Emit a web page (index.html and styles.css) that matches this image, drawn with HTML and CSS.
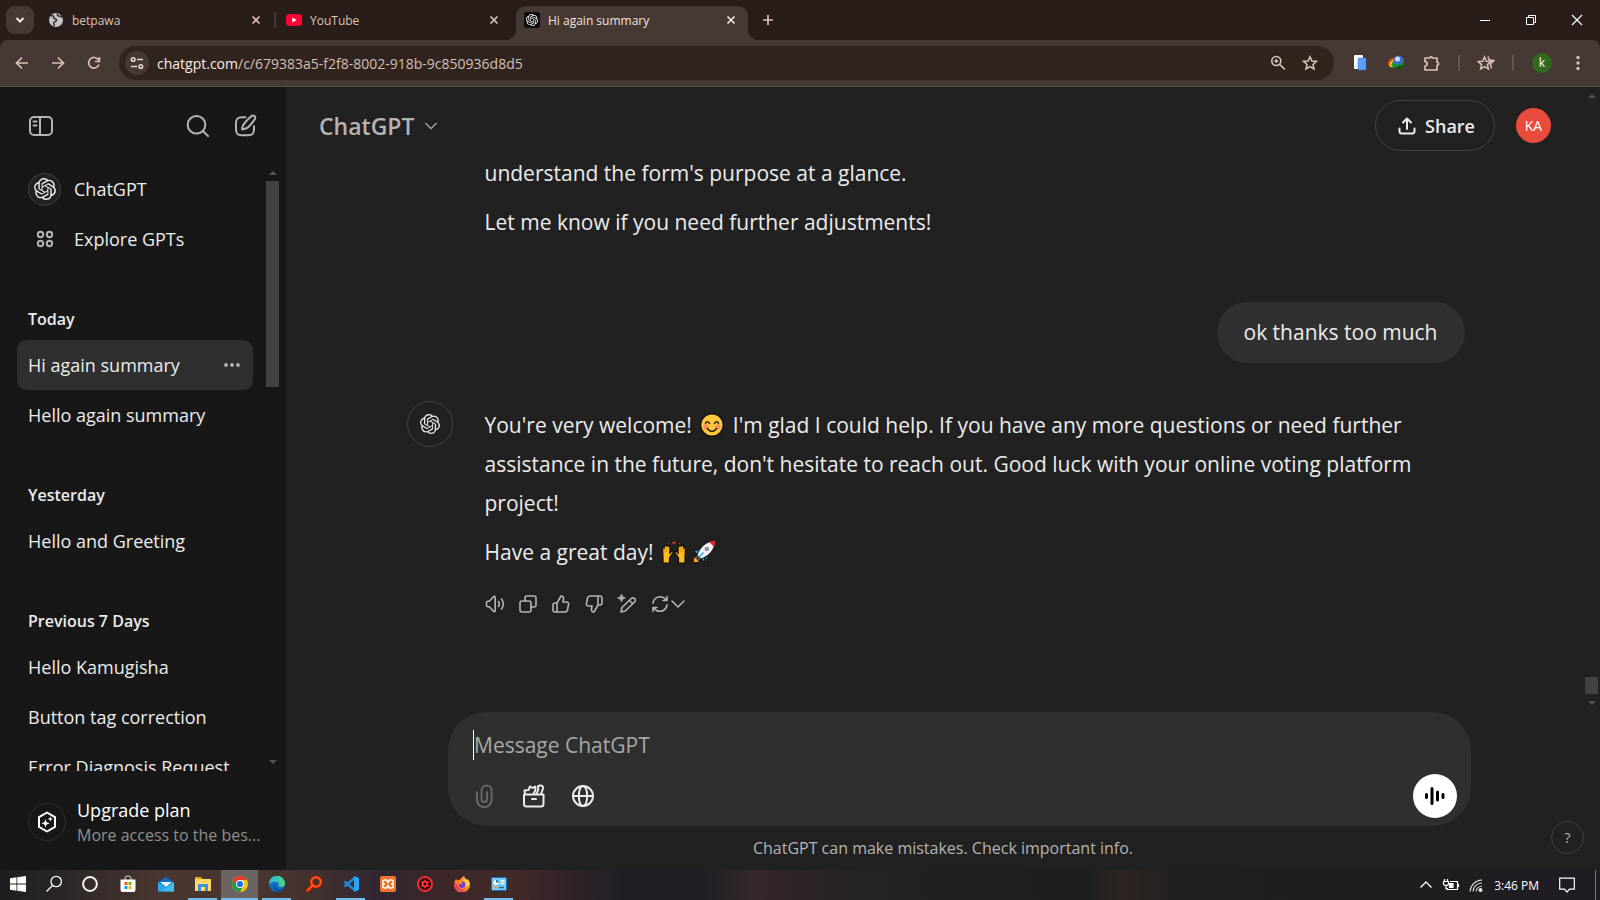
FILE: index.html
```
<!DOCTYPE html>
<html lang="en">
<head>
<meta charset="utf-8">
<title>Hi again summary</title>
<link rel="stylesheet" href="styles.css">
</head>
<body>
<svg class="defs" aria-hidden="true">
  <symbol id="openai" viewBox="0 0 24 24"><path fill="currentColor" d="M22.2819 9.8211a5.9847 5.9847 0 0 0-.5157-4.9108 6.0462 6.0462 0 0 0-6.5098-2.9A6.0651 6.0651 0 0 0 4.9807 4.1818a5.9847 5.9847 0 0 0-3.9977 2.9 6.0462 6.0462 0 0 0 .7427 7.0966 5.98 5.98 0 0 0 .511 4.9107 6.051 6.051 0 0 0 6.5146 2.9001A5.9847 5.9847 0 0 0 13.2599 24a6.0557 6.0557 0 0 0 5.7718-4.2058 5.9894 5.9894 0 0 0 3.9977-2.9001 6.0557 6.0557 0 0 0-.7475-7.0729zm-9.022 12.6081a4.4755 4.4755 0 0 1-2.8764-1.0408l.1419-.0804 4.7783-2.7582a.7948.7948 0 0 0 .3927-.6813v-6.7369l2.02 1.1686a.071.071 0 0 1 .038.0615v5.5826a4.504 4.504 0 0 1-4.4945 4.4849zm-9.6607-4.1254a4.4708 4.4708 0 0 1-.5346-3.0137l.142.0852 4.783 2.7582a.7712.7712 0 0 0 .7806 0l5.8428-3.3685v2.3324a.0804.0804 0 0 1-.0332.0615L9.74 19.9502a4.4992 4.4992 0 0 1-6.1408-1.6464zM2.3408 7.8956a4.485 4.485 0 0 1 2.3655-1.9728V11.6a.7664.7664 0 0 0 .3879.6765l5.8144 3.3543-2.0201 1.1685a.0757.0757 0 0 1-.071 0l-4.8303-2.7865A4.504 4.504 0 0 1 2.3408 7.872zm16.5963 3.8558L13.1038 8.364 15.1192 7.2a.0757.0757 0 0 1 .071 0l4.8303 2.7913a4.4944 4.4944 0 0 1-.6765 8.1042v-5.6772a.79.79 0 0 0-.407-.667zm2.0107-3.0231l-.142-.0852-4.7735-2.7818a.7759.7759 0 0 0-.7854 0L9.409 9.2297V6.8974a.0662.0662 0 0 1 .0284-.0615l4.8303-2.7866a4.4992 4.4992 0 0 1 6.6802 4.66zM8.3065 12.863l-2.02-1.1638a.0804.0804 0 0 1-.038-.0567V6.0742a4.4992 4.4992 0 0 1 7.3757-3.4537l-.142.0805L8.704 5.459a.7948.7948 0 0 0-.3927.6813zm1.0976-2.3654l2.602-1.4998 2.6069 1.4998v2.9994l-2.5974 1.4997-2.6067-1.4997Z"/></symbol>
  <symbol id="close" viewBox="0 0 16 16"><path d="M4.500 4.500l7 7M11.500 4.500l-7 7" stroke="currentColor" stroke-width="1.700" fill="none"/></symbol>
  <symbol id="chev" viewBox="0 0 16 16"><path d="M2 5l6 6 6-6" stroke="currentColor" stroke-width="1.600" fill="none" stroke-linecap="round" stroke-linejoin="round"/></symbol>
</svg>

<header class="browser">
  <div class="tabstrip">
    <button class="tab-search" aria-label="Search tabs"><svg width="16" height="16" viewBox="0 0 16 16"><path d="M4.500 6l3.500 3.500L11.500 6" stroke="#f4e4de" stroke-width="2" fill="none"/></svg></button>
    <div class="tab">
      <svg width="16" height="16" viewBox="0 0 16 16"><circle cx="8" cy="8" r="7" fill="#c4c4c6"/><path d="M2.500 4c2-1 3.500 0 3.300 1.800-.1 1.200 2.400.6 2.700 2.200.2 1.500-1.500 1.400-2.500 2.300-.9.900.5 2 .2 3.700M9.500 1.500c-.7 1.900.6 2.700 2 2.400 1.400-.2 1.500 1.300 3 1.600" stroke="#33251f" stroke-width="1.500" fill="none"/></svg>
      <span class="tab-title">betpawa</span>
      <button class="tab-close" aria-label="Close betpawa"><svg width="16" height="16"><use href="#close"/></svg></button>
    </div>
    <span class="tab-sep"></span>
    <div class="tab">
      <svg width="16" height="16" viewBox="0 0 16 16"><rect x="0" y="2" width="16" height="12" rx="3" fill="#ff0033"/><path d="M6.300 5.500v5l4.400-2.500z" fill="#fff"/></svg>
      <span class="tab-title">YouTube</span>
      <button class="tab-close" aria-label="Close YouTube"><svg width="16" height="16"><use href="#close"/></svg></button>
    </div>
    <div class="tab active">
      <span class="gpt-fav"><svg width="12" height="12"><use href="#openai"/></svg></span>
      <span class="tab-title">Hi again summary</span>
      <button class="tab-close" aria-label="Close Hi again summary"><svg width="16" height="16"><use href="#close"/></svg></button>
    </div>
    <button class="new-tab" aria-label="New tab"><svg width="12" height="12" viewBox="0 0 12 12"><path d="M6 1v10M1 6h10" stroke="#dcc1b8" stroke-width="1.700"/></svg></button>
    <div class="window-controls">
      <button aria-label="Minimize"><svg width="12" height="12" viewBox="0 0 12 12"><path d="M1 6.500h10" stroke="#fff"/></svg></button>
      <button aria-label="Restore"><svg width="12" height="12" viewBox="0 0 12 12"><path d="M1.500 3.500h7v7h-7zM3.500 3.500v-2h7v7h-2" stroke="#fff" fill="none"/></svg></button>
      <button aria-label="Close window"><svg width="12" height="12" viewBox="0 0 12 12"><path d="M1 1l10 10M11 1L1 11" stroke="#fff" stroke-width="1.200"/></svg></button>
    </div>
  </div>
  <div class="toolbar">
    <button class="nav-btn" aria-label="Back"><svg width="16" height="16" viewBox="0 0 16 16"><path d="M14 8H3M8 2.500L2.500 8 8 13.500" stroke="#dcc1b8" stroke-width="1.700" fill="none"/></svg></button>
    <button class="nav-btn" aria-label="Forward"><svg width="16" height="16" viewBox="0 0 16 16"><path d="M2 8h11M8 2.500L13.500 8 8 13.500" stroke="#dcc1b8" stroke-width="1.700" fill="none"/></svg></button>
    <button class="nav-btn" aria-label="Reload"><svg width="16" height="16" viewBox="0 0 16 16"><path d="M13 9.500A5.300 5.300 0 1 1 12.500 5M13.400 2v4.500H9" stroke="#dcc1b8" stroke-width="1.700" fill="none"/></svg></button>
    <div class="omnibox">
      <button class="site-info" aria-label="Site information"><svg width="14" height="14" viewBox="0 0 14 14" fill="none" stroke="#e6d5ce" stroke-width="1.600"><circle cx="3.200" cy="3.500" r="1.800"/><path d="M7 3.500h6M1 10.500h6"/><circle cx="10.800" cy="10.500" r="1.800"/></svg></button>
      <div class="url"><span class="host">chatgpt.com</span>/c/679383a5-f2f8-8002-918b-9c850936d8d5</div>
      <button class="nav-btn" aria-label="Zoom"><svg width="16" height="16" viewBox="0 0 16 16" fill="none" stroke="#d8c9c2" stroke-width="1.600"><circle cx="6.300" cy="6" r="4.500"/><path d="M9.800 9.500l5 5"/><path d="M4.300 6h4M6.300 4v4" stroke-width="1.300"/></svg></button>
      <button class="nav-btn" aria-label="Bookmark"><svg width="16" height="16" viewBox="0 0 16 16"><path d="M8 1.800l1.900 4.200 4.500.4-3.400 3 1 4.500L8 11.500l-4 2.400 1-4.500-3.400-3 4.500-.4z" fill="none" stroke="#d8c9c2" stroke-width="1.500"/></svg></button>
    </div>
    <div class="extensions">
      <button class="nav-btn" aria-label="Documents extension"><svg width="16" height="16" viewBox="0 0 16 16"><rect x="2" y="0" width="9" height="14" rx="1" fill="#fff"/><rect x="6" y="3" width="8" height="12" rx="1" fill="#5ba1fb" stroke="#3c6fd0" stroke-width=".5"/></svg></button>
      <button class="nav-btn" aria-label="Download manager"><svg width="18" height="16" viewBox="0 0 18 16"><path d="M9 3.500C3 3 0 8 3 11.500" stroke="#e33b20" stroke-width="2" fill="none"/><path d="M9 5C4.500 5 2 8.500 4.500 12" stroke="#ffd92a" stroke-width="1.800" fill="none"/><path d="M9 6.500C6 7 4.500 9.500 6.500 12.500" stroke="#2fae2f" stroke-width="1.800" fill="none"/><circle cx="11.500" cy="5.800" r="5.300" fill="#3d6fc8"/><circle cx="10.500" cy="4" r="2.500" fill="#c5dcff"/><path d="M6 9c3 1.500 7 1 10.500-2l-1 4.500L11 15.500 9.500 12 6 12.500z" fill="#119c22"/><path d="M9.500 12l4.500-2 1.500 1.500L11 15.500z" fill="#084f10"/></svg></button>
      <button class="nav-btn" aria-label="Extensions"><svg width="18" height="18" viewBox="0 0 18 18"><path d="M2 4h4.500a1.600 1.600 0 0 1 3 0H14v4.200a1.600 1.600 0 0 1 0 3.200V16H2v-4a2.200 2.200 0 0 0 0-4.400z" fill="none" stroke="#dcc1b8" stroke-width="1.700" stroke-linejoin="round"/></svg></button>
      <span class="bar-sep"></span>
      <button class="nav-btn" aria-label="Favorites"><svg width="18" height="16" viewBox="0 0 18 16" fill="none" stroke="#dcc1b8" stroke-width="1.500"><path d="M7.500 2l1.800 4.200 4.500.4-3.400 3 1 4.300-3.900-2.300-3.900 2.300 1-4.300-3.400-3 4.500-.4z"/><path d="M11 1.500l1 3.300 5 .9-3.700 3.300 1.200 4.500"/></svg></button>
      <span class="bar-sep"></span>
      <button class="profile" aria-label="Profile">k</button>
      <button class="kebab" aria-label="Menu"><svg width="4" height="16" viewBox="0 0 4 16" fill="#dcc1b8"><circle cx="2" cy="2.500" r="1.700"/><circle cx="2" cy="8" r="1.700"/><circle cx="2" cy="13.500" r="1.700"/></svg></button>
    </div>
  </div>
</header>

<div class="app">
  <aside class="sidebar">
    <div class="side-head">
      <button aria-label="Close sidebar"><svg width="26" height="22" viewBox="0 0 26 22" fill="none" stroke="currentColor" stroke-width="2"><rect x="2" y="2" width="22" height="18" rx="4"/><path d="M12 2v18"/><path d="M5.500 6.500h3M5.500 10.500h3" stroke-linecap="round"/></svg></button>
      <button class="push" aria-label="Search chats"><svg width="24" height="24" viewBox="0 0 24 24" fill="none" stroke="currentColor" stroke-width="2" stroke-linecap="round"><circle cx="10.500" cy="10.800" r="8.800"/><path d="M17 17.300l5 4.700"/></svg></button>
      <button aria-label="New chat"><svg width="24" height="24" viewBox="0 0 24 24" fill="none" stroke="currentColor" stroke-width="2" stroke-linecap="round" stroke-linejoin="round"><path d="M11.500 3.200H8c-4.500 0-6 1.500-6 6v6c0 4.500 1.500 6 6 6h6c4.500 0 6-1.500 6-6v-3"/><path d="M9 11.500c1-1.800 5.500-6.700 8.200-9.200a2.200 2.200 0 0 1 3.500 3c-2 2.800-6 7.700-8 8.900-1.200.8-2.700 1-4.500 1.200 0-1.500.2-2.700.8-3.900z"/></svg></button>
    </div>
    <div class="side-scroll">
      <nav class="side-list">
        <a class="row gpt" href="#"><span class="logo"><svg width="22" height="22"><use href="#openai"/></svg></span>ChatGPT</a>
        <a class="row gpt" href="#"><span class="grid-ic"><svg width="18" height="18" viewBox="0 0 18 18" fill="none" stroke="#b4b4b4" stroke-width="2"><circle cx="4.500" cy="4.500" r="2.700"/><circle cx="13.500" cy="4.500" r="2.700"/><circle cx="4.500" cy="13.500" r="2.700"/><circle cx="13.500" cy="13.500" r="2.700"/></svg></span>Explore GPTs</a>
        <h3>Today</h3>
        <a class="row current" href="#">Hi again summary<svg class="dots" width="16" height="4" viewBox="0 0 16 4" fill="#b4b4b4"><circle cx="2" cy="2" r="1.900"/><circle cx="8" cy="2" r="1.900"/><circle cx="14" cy="2" r="1.900"/></svg></a>
        <a class="row" href="#">Hello again summary</a>
        <h3>Yesterday</h3>
        <a class="row" href="#">Hello and Greeting</a>
        <h3>Previous 7 Days</h3>
        <a class="row" href="#">Hello Kamugisha</a>
        <a class="row" href="#">Button tag correction</a>
        <a class="row" href="#">Error Diagnosis Request</a>
      </nav>
      <div class="scrollbar"><i class="up"></i><span class="thumb side-thumb"></span><i class="down"></i></div>
    </div>
    <a class="upgrade" href="#">
      <span class="up-ic"><svg width="20" height="22" viewBox="0 0 20 22"><path d="M10 1.500l8 4.600v9.800l-8 4.600-8-4.600V6.100z" fill="none" stroke="#fff" stroke-width="2" stroke-linejoin="round"/><path d="M8.500 8l1.100 3.200 3.100 1.100-3.100 1.100-1.100 3.200-1.100-3.200-3.100-1.100 3.100-1.100zM13.300 5.500l.7 1.800 1.800.7-1.800.7-.7 1.800-.7-1.800-1.800-.7 1.800-.7z" fill="#fff"/></svg></span>
      <span class="up-text"><span class="up-title">Upgrade plan</span><span class="up-sub">More access to the bes...</span></span>
    </a>
  </aside>

  <main class="main">
    <div class="view">
      <div class="chat">
        <div class="chat-head">
          <button class="model">ChatGPT<svg width="14" height="14"><use href="#chev"/></svg></button>
          <button class="share"><svg width="18" height="18" viewBox="0 0 18 18" fill="none" stroke="currentColor" stroke-width="2" stroke-linecap="round" stroke-linejoin="round"><path d="M9 12V2M5 5.500L9 1.500l4 4M1.500 11.500V14c0 1.800.7 2.500 2.500 2.500h10c1.800 0 2.500-.7 2.500-2.500v-2.500"/></svg>Share</button>
          <button class="avatar" aria-label="Account">KA</button>
        </div>
        <div class="thread">
          <div class="prose">
            <p>understand the form's purpose at a glance.</p>
            <p>Let me know if you need further adjustments!</p>
          </div>
          <div class="bubble">ok thanks too much</div>
          <div class="reply">
            <span class="bot"><svg width="20" height="20"><use href="#openai"/></svg></span>
            <div class="prose">
              <p>You're very welcome! <svg class="emoji" role="img" aria-label="smiling face" viewBox="0 0 24 24"><circle cx="12" cy="12" r="11.300" fill="#ffc83d" stroke="#111" stroke-width="1.400"/><circle cx="5.800" cy="14" r="2.600" fill="#ff8a5c"/><circle cx="18.200" cy="14" r="2.600" fill="#ff8a5c"/><path d="M5.500 10.500c.5-2.300 3.300-2.300 4 0M14.500 10.500c.7-2.300 3.500-2.300 4 0M7.500 15.500c2 3.600 7 3.600 9 0" fill="none" stroke="#402a20" stroke-width="1.600" stroke-linecap="round"/></svg> I'm glad I could help. If you have any more questions or need further assistance in the future, don't hesitate to reach out. Good luck with your online voting platform project!</p>
              <p>Have a great day! <span class="emoji-pair"><svg class="emoji" role="img" aria-label="raising hands" viewBox="0 0 24 24"><g fill="#ffb91d" stroke="#111" stroke-width="1.200"><path id="hand" d="M1 23v-5.500L.6 9c0-1.300 1-1.700 1.500-1l.4-2c.4-1 1.500-1 1.800 0 .5-1 1.700-.9 1.900.2.8-.6 1.700-.1 1.700 1v6l1.500-1.500c1-.8 1.900.2 1.400 1.300L7.500 18v5z"/><use href="#hand" transform="matrix(-1 0 0 1 24 0)"/></g><path d="M3 8v4M5 8v4M21 8v4M19 8v4" stroke="#e08a00" stroke-width=".7"/><path d="M9 1.500h6L12 4.800zM6.500 2L8 5 5 4.500zM17.500 2L16 5l3-.5z" fill="#e8590c" stroke="#111" stroke-width=".7"/></svg><svg class="emoji" role="img" aria-label="rocket" viewBox="0 0 24 24"><path d="M1 23l1-7 6 6z" fill="#ff9a2b" stroke="#111"/><path d="M2 11l7-2 6 6-3 7-3-4-3-3zM12 13l4 4-3 6z" fill="#1bb0ea" stroke="#111"/><path d="M5 15C8 7 14 1 23.300.7 23 10 17 16 9 19z" fill="#f2f2f2" stroke="#111"/><path d="M17 1.800q3-1 6.300-1.100Q23.200 4 22.200 7z" fill="#e3203b"/><path d="M5 15l4 4-2.500 1.500L3.500 17.500z" fill="#555"/><circle cx="14.800" cy="9" r="2.300" fill="#8d9299"/><path d="M7 17l4.500-4.500" stroke="#1bb0ea" stroke-width="1.500"/></svg></span></p>
              <div class="actions">
                <button aria-label="Read aloud"><svg width="20" height="20" viewBox="0 0 20 20"><path d="M1.500 8.500v3q0 1.300 1.300 1.300h1.400l4.300 4.500q1.700 1 1.700-.8v-13q0-1.800-1.700-.8L4.200 7.200H2.800q-1.300 0-1.300 1.300zM13.500 7.500q1.500 2.500 0 5M16.500 5q3.500 5 0 10"/></svg></button>
                <button aria-label="Copy"><svg width="20" height="20" viewBox="0 0 20 20"><rect x="2" y="7" width="11" height="11" rx="2"/><path d="M7 7V4q0-2 2-2h7q2 0 2 2v7q0 2-2 2h-3"/></svg></button>
                <button aria-label="Good response"><svg width="20" height="20" viewBox="0 0 20 20"><path d="M6 9v9H4q-2 0-2-2v-5q0-2 2-2zM6 9l4-7q3 0 2.500 3L12 8h3.500q2.500 0 2 2.500L16.500 16q-.5 2-2.500 2H6"/></svg></button>
                <button aria-label="Bad response"><svg width="20" height="20" viewBox="0 0 20 20"><path d="M14 11V2h2q2 0 2 2v5q0 2-2 2zM14 11l-4 7q-3 0-2.500-3L8 12H4.500Q2 12 2.500 9.500L3.500 4Q4 2 6 2h8"/></svg></button>
                <button aria-label="Edit in canvas"><svg width="20" height="20" viewBox="0 0 20 20"><path d="M4 18l1-4.500 9.500-9.300q1.800-1 3.200.6 1.300 1.700-.2 3.200L8.300 17zM12.500 6.500l3 3"/><path d="M4.500 0q.6 3.400 4 4-3.400.6-4 4-.6-3.400-4-4 3.400-.6 4-4z" fill="currentColor" stroke-width=".6"/></svg></button>
                <button class="regen" aria-label="Regenerate"><svg width="20" height="20" viewBox="0 0 20 20"><path d="M3 9q1-6 7-6.300 4 0 6 3.300M17 2.500V6.500h-4M17 11q-1 6-7 6.300-4 0-6-3.300M3 17.500v-4h4"/></svg><svg width="16" height="16"><use href="#chev"/></svg></button>
              </div>
            </div>
          </div>
        </div>
      </div>
      <div class="scrollbar"><i class="up"></i><span class="thumb page-thumb"></span><i class="down"></i></div>
    </div>
    <form class="composer">
      <input type="text" aria-label="Message ChatGPT" placeholder="Message ChatGPT">
      <div class="tools">
        <button type="button" class="dim" aria-label="Attach"><svg width="24" height="24" viewBox="0 0 24 24" fill="none" stroke="currentColor" stroke-width="2" stroke-linecap="round"><path d="M4 8.500v7.300a7.300 7.300 0 0 0 14.600 0V6.500a5 5 0 0 0-10 0v8.800a2.700 2.700 0 0 0 5.400 0V8"/></svg></button>
        <button type="button" aria-label="Tools"><svg width="24" height="24" viewBox="0 0 24 24" fill="none" stroke="currentColor" stroke-width="2" stroke-linejoin="round"><path d="M2 10.500h19.500V20q0 2.500-2.500 2.500H4.500Q2 22.500 2 20zM3 10L2.500 6.500 6.500 6 8 2.500l2.500 1.500L13 2.500l.500 3.500-2 4M14.500 10l2-5q-2-2.500 1-3.500 4-.500 3.500 3l-2 5.500"/><path d="M10 15h4" stroke-linecap="round"/></svg></button>
        <button type="button" aria-label="Search the web"><svg width="24" height="24" viewBox="0 0 24 24" fill="none" stroke="currentColor" stroke-width="2"><circle cx="12" cy="12" r="10"/><ellipse cx="12" cy="12" rx="4.200" ry="10"/><path d="M2 12h20"/></svg></button>
        <button type="button" class="voice" aria-label="Voice mode"><svg width="22" height="22" viewBox="0 0 22 22" stroke="#000" stroke-width="3" stroke-linecap="round"><path d="M2.500 9.500v3M8 3.500v15M13.500 7v8M19 9.500v3"/></svg></button>
      </div>
    </form>
    <div class="foot">ChatGPT can make mistakes. Check important info.<button class="help" aria-label="Help">?</button></div>
  </main>
</div>

<footer class="taskbar">
  <button class="system" aria-label="Start"><svg width="16" height="16" viewBox="0 0 16 16" fill="#fff"><path d="M0 2.200l6.500-.9v6.200H0zM7.300 1.200L16 0v7.500H7.300zM0 8.400h6.500v6.300L0 13.800zM7.300 8.400H16V16l-8.700-1.200z"/></svg></button>
  <button class="system" aria-label="Search"><svg width="18" height="18" viewBox="0 0 18 18" fill="none" stroke="#fff" stroke-width="1.300"><circle cx="11.200" cy="6.500" r="5.200"/><path d="M7.500 10.500L1.500 16.500"/></svg></button>
  <button class="system" aria-label="Cortana"><svg width="18" height="18" viewBox="0 0 18 18"><circle cx="9" cy="9" r="6.900" fill="none" stroke="#f2f2f2" stroke-width="2"/></svg></button>
  <button class="wide" aria-label="Store"><svg width="16" height="18" viewBox="0 0 16 18"><path d="M5 5V3q0-2 3-2t3 2v2" fill="none" stroke="#ddd"/><path d="M.5 4.500h15V15q0 2-2 2h-11q-2 0-2-2z" fill="#fff"/><path fill="#f25022" d="M4.500 7h3v3h-3z"/><path fill="#7fba00" d="M8.500 7h3v3h-3z"/><path fill="#00a4ef" d="M4.500 11h3v3h-3z"/><path fill="#ffb900" d="M8.500 11h3v3h-3z"/></svg></button>
  <button aria-label="Mail"><svg width="16" height="16" viewBox="0 0 16 16"><path d="M0 6l8-5 8 5v9H0z" fill="#0f6cbd"/><path d="M2 6h12L8 11z" fill="#eaf6ff"/><path d="M0 6l8 5.500L16 6v9.500H0z" fill="#28a8ea"/><path d="M16 6L3 15.500h13z" fill="#50d0f5" opacity=".6"/></svg></button>
  <button class="open" aria-label="File Explorer"><svg width="16" height="16" viewBox="0 0 16 16"><path d="M0 1h6l1.500 2H0z" fill="#e8a317"/><path d="M0 3h16v12H0z" fill="#ffd766"/><path d="M3 15V9q0-1 1-1h8q1 0 1 1v6h-3v-4H6v4z" fill="#3b94d9"/></svg></button>
  <button class="open focused" aria-label="Chrome"><svg width="16" height="16" viewBox="0 0 16 16"><circle cx="8" cy="8" r="8" fill="#fbc116"/><path d="M8 8l3.460 2L8 16A8 8 0 0 1 1.070 4z" fill="#269a45"/><path d="M8 4h6.930A8 8 0 0 0 1.070 4L4.540 10A4 4 0 0 1 8 4z" fill="#e33b2e"/><circle cx="8" cy="8" r="4" fill="#fff"/><circle cx="8" cy="8" r="3.100" fill="#1a73e8"/></svg></button>
  <button class="open" aria-label="Edge"><svg width="16" height="16" viewBox="0 0 16 16"><circle cx="8" cy="8" r="8" fill="#0f6fc0"/><path d="M0 8a8 8 0 0 1 16-.5C16 10 14 11 12 11c-2.500 0-3-1-2.200-2C10.500 6 4 4 0 8z" fill="#35c1c8"/><path d="M9 .1A8 8 0 0 1 16 7.500C16 10 14 11 12 11l-2-1c2-2 1-6-1-9.900z" fill="#5bd36a" opacity=".75"/><path d="M5.500 8.500c0 4 3.500 6 8.500 4.500a8 8 0 0 1-5.500 3C5 15 4.500 11 5.500 8.500z" fill="#0b4a94"/></svg></button>
  <button aria-label="Search tool"><svg width="18" height="18" viewBox="0 0 18 18" fill="none" stroke-linecap="round"><path d="M8 10l-5.500 5.500" stroke="#a51c00" stroke-width="4"/><circle cx="11" cy="7" r="4.700" stroke="#a51c00" stroke-width="3.600"/><path d="M8 10l-5.500 5.500" stroke="#ff5a1a" stroke-width="2"/><circle cx="11" cy="7" r="4.700" stroke="#ff5a1a" stroke-width="2"/></svg></button>
  <button class="open" aria-label="Visual Studio Code"><svg width="16" height="16" viewBox="0 0 16 16"><path d="M1.500 5.500L11.500 14M1.500 10.500L11.500 2" stroke="#1e8ad6" stroke-width="2.400"/><path d="M11 0l5 2v12l-5 2z" fill="#2ea4f0"/></svg></button>
  <button aria-label="XAMPP"><svg width="16" height="16" viewBox="0 0 16 16"><rect width="16" height="16" rx="2" fill="#f07427"/><path d="M4.500 4h2L8 6.500 9.500 4h2q1.800 0 1.800 2T11.500 8q1.800 0 1.800 2t-1.800 2h-2L8 9.500 6.500 12h-2q-1.800 0-1.800-2T4.500 8Q2.700 8 2.700 6T4.500 4z" fill="none" stroke="#fff" stroke-width="1.500" stroke-linejoin="round"/></svg></button>
  <button aria-label="Recorder"><svg width="16" height="16" viewBox="0 0 16 16"><circle cx="8" cy="8" r="7" fill="#1c0808" stroke="#f03030" stroke-width="2"/><circle cx="8" cy="8" r="2.500" fill="none" stroke="#f03030" stroke-width="1.800"/><path d="M8 3.500v9M4.100 5.700l7.800 4.600M11.900 5.700l-7.800 4.600" stroke="#f03030" stroke-width="1.500"/><circle cx="8" cy="8" r="1.200" fill="#1c0808"/></svg></button>
  <button aria-label="Firefox"><svg width="16" height="16" viewBox="0 0 16 16"><path d="M2 3l1.500 1.500L6 3.500q2-2.500 4-3.500 0 2 2.500 4l1-1Q16 6 16 9a8 7.500 0 0 1-16 0q0-3.500 2-6z" fill="#ff8a1e"/><path d="M10 0q0 2 2.500 4l1-1Q16 6 16 9l-4 2q1-5-3-7z" fill="#ffd43a"/><path d="M0 9a8 7.500 0 0 0 13 5Q5 15 3 8l-2-2z" fill="#f0386a"/><circle cx="8" cy="8.700" r="3.200" fill="#7a3ee0"/><path d="M4 6.500q3-1 5 .5-2 0-2.500 1.500z" fill="#ff9c2a"/></svg></button>
  <button class="open" aria-label="Control Panel"><svg width="16" height="14" viewBox="0 0 16 14"><rect x=".5" y=".5" width="15" height="13" rx="1" fill="#7cc8f5" stroke="#1470b5"/><circle cx="5" cy="5.500" r="2.500" fill="#fff"/><path d="M5 5.500V3a2.500 2.500 0 0 1 2.500 2.500z" fill="#1470b5"/><path d="M9.500 4h4M9.500 6.500h4" stroke="#fff" stroke-width="1.500"/><path d="M3 10.500h4" stroke="#f6a21e" stroke-width="1.500"/><path d="M8 10.500h5" stroke="#1470b5" stroke-width="1.500"/></svg></button>
  <div class="tray">
    <svg width="14" height="14" viewBox="0 0 14 14"><path d="M1.500 9.500L7 4l5.500 5.500" stroke="#fff" stroke-width="1.300" fill="none"/></svg>
    <svg width="18" height="14" viewBox="0 0 18 14" fill="none" stroke="#fff" stroke-width="1.200"><path d="M8 3.500h7.500v8H5.500V10M16.500 6v3M2.500 1v2.500M5.500 1v2.500M1.500 3.500h5V6q-.5 1.500-2.500 1.500T1.500 6zM4 7.500v3.500h1.500"/><path d="M7.500 5.500h3.500v4H7.500z" fill="#fff"/></svg>
    <svg width="14" height="14" viewBox="0 0 14 14" fill="none" stroke="#ddd" stroke-width="1.100"><path d="M1 13.500A12.500 12.500 0 0 1 13 2M4 13.500A9 9 0 0 1 13 5M7 13.500A6 6 0 0 1 13 8.200"/><circle cx="11.500" cy="12" r="1.500" fill="#fff"/></svg>
    <time>3:46 PM</time>
    <svg width="16" height="16" viewBox="0 0 16 16"><path d="M.7 1.200h14.600v11H10.500L8 15l-2.500-2.800H.7z" fill="none" stroke="#fff" stroke-width="1.200"/></svg>
    <span class="peek"></span>
  </div>
</footer>
</body>
</html>
```
FILE: styles.css
```
* { box-sizing: border-box; }
body {
  margin: 0;
  height: 100vh;
  display: flex;
  flex-direction: column;
  overflow: hidden;
  background: #212121;
  color: #ececec;
  font-family: "Open Sans", "Noto Sans", sans-serif;
}
button {
  border: 0;
  padding: 0;
  background: none;
  color: inherit;
  font: inherit;
  display: flex;
  align-items: center;
  justify-content: center;
  flex: none;
}
a { color: inherit; text-decoration: none; }
svg { flex: none; display: block; }
.defs { position: absolute; width: 0; height: 0; }

/* Browser chrome */
.browser { background: #281d19; flex: none; }
.tabstrip { display: flex; height: 40px; padding-left: 6px; align-items: center; }
.tab-search { width: 28px; height: 28px; border-radius: 9px; background: #463832; }
.tab { flex: 0 0 240px; height: 34px; display: flex; align-items: center; gap: 8px; padding: 0 9px 0 14px; font-size: 12px; color: #dcc1b8; }
.tab-title { flex: 1; }
.tab-close { width: 18px; height: 18px; }
.tab-sep { width: 2px; height: 16px; margin-right: -4px; background: #463832; }
.tab.active { flex-basis: 232px; align-self: flex-end; position: relative; margin-left: 4px; padding: 0 8px 6px; border-radius: 10px 10px 0 0; background: #463832; color: #f4e4de; }
.tab.active::before, .tab.active::after { content: ""; position: absolute; bottom: 0; width: 10px; height: 10px; }
.tab.active::before { left: -10px; background: radial-gradient(circle at 0 0, transparent 10px, #463832 10px); }
.tab.active::after { right: -10px; background: radial-gradient(circle at 100% 0, transparent 10px, #463832 10px); }
.gpt-fav { width: 16px; height: 16px; border-radius: 3px; background: #0d0d0f; display: flex; align-items: center; justify-content: center; color: #fff; }
.new-tab { width: 40px; height: 34px; }
.window-controls { display: flex; margin-left: auto; }
.window-controls button { width: 46px; height: 40px; }
.toolbar { display: flex; align-items: center; height: 47px; padding: 0 12px 0 4px; background: #463832; border-bottom: 1px solid #54504e; border-radius: 8px 8px 0 0; }
.nav-btn { width: 36px; height: 34px; }
.omnibox { flex: 1; height: 34px; margin: 0 8px 0 7px; padding: 0 8px 0 6px; display: flex; align-items: center; border-radius: 17px; background: #31231d; }
.omnibox .nav-btn { width: 32px; }
.site-info { width: 24px; height: 24px; border-radius: 50%; background: #463832; }
.url { flex: 1; margin-left: 8px; font-size: 14px; color: #d3c0b9; }
.host { color: #fbeee9; }
.extensions { display: flex; align-items: center; }
.bar-sep { width: 2px; height: 16px; margin: 0 8px; background: #66534b; }
.profile { width: 20px; height: 20px; margin: 0 16px 0 10px; border-radius: 50%; background: #33691e; color: #fff; font-size: 12px; line-height: 20px; }
.kebab { width: 20px; height: 34px; }

/* Layout */
.app { flex: 1; min-height: 0; display: flex; }
.sidebar { flex: 0 0 286px; min-width: 0; display: flex; flex-direction: column; background: #171717; }
.side-head { display: flex; align-items: center; height: 77px; padding: 0 28px; gap: 24px; color: #b4b4b4; }
.push { margin-left: auto; }
.side-scroll { flex: 1; min-height: 0; display: flex; padding-right: 7px; }
.side-list { flex: 1; min-width: 0; overflow: hidden; padding: 0 13px 0 17px; }
.row { display: flex; align-items: center; height: 50px; padding: 0 13px 0 11px; border-radius: 10px; font-size: 18px; white-space: nowrap; }
.row.current { background: #2f2f2f; }
.dots { margin-left: auto; }
.gpt { gap: 13px; }
.logo { flex: none; width: 33px; height: 33px; border: 1px solid #424242; border-radius: 50%; background: #212121; display: flex; align-items: center; justify-content: center; }
.grid-ic { flex: none; width: 33px; display: flex; justify-content: center; }
.side-list h3 { margin: 0; padding: 42px 11px 8px; font-size: 16px; line-height: 26px; font-weight: 600; }
.scrollbar { flex: none; width: 13px; display: flex; flex-direction: column; align-items: center; }
.scrollbar i { border: 4px solid transparent; }
.scrollbar .up { border-top: 0; border-bottom-color: #525252; margin: 7px 0 6px; }
.scrollbar .down { border-bottom: 0; border-top-color: #525252; margin: auto 0 7px; }
.thumb { width: 13px; background: #424242; }
.side-thumb { height: 34%; }
.page-thumb { height: 17px; margin-top: auto; }
.scrollbar .page-thumb + .down { margin: 7px 0 5px; }
.upgrade { display: flex; align-items: center; gap: 11px; height: 99px; padding: 2px 16px 0 28px; }
.up-ic { flex: none; width: 38px; height: 38px; border: 1px solid #303030; border-radius: 50%; display: flex; align-items: center; justify-content: center; }
.up-text { min-width: 0; display: flex; flex-direction: column; }
.up-title { font-size: 18px; line-height: 26px; color: #fff; }
.up-sub { font-size: 16px; line-height: 24px; color: #8f8f8f; white-space: nowrap; }

/* Conversation */
.main { flex: 1; min-width: 0; display: flex; flex-direction: column; }
.view { flex: 1; min-height: 0; display: flex; padding-right: 2px; }
.chat { flex: 1; min-width: 0; overflow: hidden; }
.chat-head { display: flex; align-items: center; padding: 13px 34px 3px 33px; }
.model { gap: 10px; color: #b4b4b4; font-size: 23px; font-weight: 600; }
.share { height: 51px; margin-left: auto; padding: 0 19px 0 22px; gap: 9px; border: 1px solid #424242; border-radius: 26px; font-size: 18px; font-weight: 600; }
.avatar { width: 35px; height: 35px; margin-left: 21px; border-radius: 50%; background: #e94b3c; color: #fff; font-size: 14px; }
.thread { max-width: 1058px; margin: 0 auto; display: flex; flex-direction: column; }
.prose { flex: 1; font-size: 21px; line-height: 39px; }
.thread > .prose { padding-left: 78px; }
.prose p { margin: 0 0 10px; }
.bubble { align-self: flex-end; margin: 50px 0 38px; padding: 11px 27px; border-radius: 31px; background: #303030; font-size: 21px; line-height: 39px; }
.reply { display: flex; gap: 32px; }
.bot { flex: none; width: 46px; height: 46px; border: 1px solid #424242; border-radius: 50%; display: flex; align-items: center; justify-content: center; }
.reply .prose { padding-top: 5px; }
.emoji { display: inline-block; width: 24px; height: 24px; margin: 0 3px; vertical-align: -4px; }
.emoji-pair .emoji { margin: 0 3px; }
.actions { display: flex; gap: 13px; margin-top: 22px; color: #b4b4b4; }
.actions svg { fill: none; stroke: currentColor; stroke-width: 1.6; stroke-linejoin: round; stroke-linecap: round; }
.composer { align-self: center; width: 78%; max-width: 1023px; margin: 2px 0 0 33px; padding: 18px 14px 8px 25px; border-radius: 38px; background: #2f2f2f; }
.composer input { display: block; width: 100%; height: 30px; padding: 0; border: 0; border-left: 1px solid #fff; background: none; color: #ececec; outline: 0; font: inherit; font-size: 21px; }
.composer input::placeholder { color: #a8a8a8; opacity: 1; }
.tools { display: flex; align-items: center; gap: 25px; margin-top: 14px; }
.dim { color: #676767; }
.voice { width: 44px; height: 44px; margin-left: auto; border-radius: 50%; background: #fff; }
.foot { position: relative; height: 44px; text-align: center; font-size: 16px; line-height: 45px; color: #b4b4b4; }
.help { position: absolute; right: 16px; bottom: 16px; width: 33px; height: 33px; border: 1px solid #424242; border-radius: 50%; font-size: 14px; line-height: 16px; }

/* Taskbar */
.taskbar { flex: none; display: flex; height: 30px; background: linear-gradient(90deg, #1d1e21 0, #272425 3%, #4a3630 10%, #49362f 16%, #40312e 20%, #302532 24%, #3a2629 27%, #432a27 32%, #33232a 35%, #1e1f25 39%, #1f2025 44%, #35262a 47%, #242224 54%, #1e1f1f 63%, #1e1e1f 68%, #2e241f 70%, #1e1f20 74%, #1e1e1f 90%, #1f1c25 100%); }
.taskbar button { width: 37px; border-bottom: 2px solid transparent; }
.taskbar .system { width: 36px; }
.taskbar .wide { width: 39px; }
.taskbar .open { width: 29px; margin: 0 4px; border-color: #76b9ed; }
.taskbar .focused { width: 37px; margin: 0; background: #6c6462; }
.tray { display: flex; align-items: center; gap: 9px; margin-left: auto; font-size: 12px; color: #fff; }
.tray time { margin: 0 11px 0 2px; }
.peek { width: 1px; height: 30px; margin: 0 4px 0 11px; background: #7a7a80; }
```
